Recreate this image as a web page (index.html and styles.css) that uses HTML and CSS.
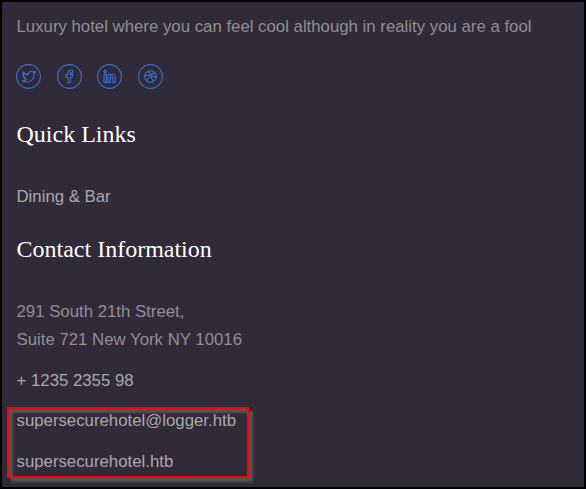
FILE: index.html
```html
<!DOCTYPE html>
<html lang="en">
<head>
<meta charset="utf-8">
<title>Hotel footer</title>
<link rel="stylesheet" href="styles.css">
</head>
<body>
<footer class="footer">
  <p class="tagline">Luxury hotel where you can feel cool although in reality you are a fool</p>
  <ul class="social">
    <li><a class="social-link"><svg viewBox="0 0 25 25"><circle cx="12.5" cy="12.5" r="11.9"/><path d="M6.8 8C8.5 9.7 10.3 10.6 12.4 10.7C12 8.5 13.3 7.2 15 7.2C16 7.2 16.6 7.6 17.1 8.1L19 7.3L18.2 8.9L19.5 8.7L18 10.3C18.1 14.8 15 18 11 18C9.3 18 7.9 17.5 6.6 16.7C8.2 16.7 9.3 16.3 10.3 15.6C9 15.4 8.2 14.7 7.8 13.6H9C7.8 13.1 7 12.2 6.9 10.8L8.1 11.1C6.8 10.1 6.5 9.2 6.8 8Z"/></svg></a></li>
    <li><a class="social-link"><svg viewBox="0 0 25 25"><circle cx="12.5" cy="12.5" r="11.9"/><path d="M11 18.5V13.2H9V10.6H11V9.1C11 7 12.1 6.3 13.7 6.3H15.5V8.6H14.3C13.7 8.6 13.4 8.9 13.4 9.5V10.6H15.5L15.2 13.2H13.4V18.5Z"/></svg></a></li>
    <li><a class="social-link"><svg viewBox="0 0 25 25"><circle cx="12.5" cy="12.5" r="11.9"/><circle cx="8.1" cy="7.6" r="1.2"/><path d="M7 10.3H9.3V18.5H7ZM11 10.3H13.1V11.3C14.9 9.4 18.2 10 18.2 13.1V18.5H15.9V13.8C15.9 11.9 13.3 11.9 13.3 13.8V18.5H11Z"/></svg></a></li>
    <li><a class="social-link"><svg viewBox="0 0 25 25"><circle cx="12.5" cy="12.5" r="11.9"/><circle cx="12.5" cy="12.5" r="5.8"/><path d="M10.4 7.1C12.7 10 14.2 13.5 14.9 17.7M6.8 11.5C11.1 11.7 14.7 10.7 16.5 8.4M8.5 16.7C10.3 13.2 13.8 11.7 18.2 12.9"/></svg></a></li>
  </ul>
  <h2 class="heading">Quick Links</h2>
  <ul class="list links"><li>Dining &amp; Bar</li></ul>
  <h2 class="heading">Contact Information</h2>
  <ul class="list">
    <li class="address">291 South 21th Street,<br>Suite 721 New York NY 10016</li>
    <li>+ 1235 2355 98</li>
  </ul>
  <div class="highlight">
    <ul class="list">
      <li>supersecurehotel@logger.htb</li>
      <li>supersecurehotel.htb</li>
    </ul>
  </div>
</footer>
</body>
</html>
```
FILE: styles.css
```css
* { box-sizing: border-box; }
body { margin: 0; background: #000; }
.footer {
  width: 586px;
  height: 489px;
  overflow: hidden;
  padding: 11px 14.5px 0;
  border: 2px solid #000;
  background: #312a39;
  color: #aba8ae;
  font: 16.8px/28px "Liberation Sans", Arial, sans-serif;
}
.tagline { margin: 0; color: #928e96; white-space: nowrap; }
.social {
  display: flex;
  gap: 15.7px;
  margin: 23px 0 0 -0.5px;
  padding: 0;
  list-style: none;
}
.social-link { display: block; width: 25px; height: 25px; }
.social svg {
  display: block;
  width: 25px;
  height: 25px;
  fill: none;
  stroke: #3c70d2;
  stroke-width: 1.1;
  stroke-linejoin: round;
}
.heading {
  margin: 27px 0 0;
  color: #fff;
  font: 400 24px/36px "Liberation Serif", "Times New Roman", serif;
}
.list { margin: 0; padding: 0; list-style: none; }
.list li + li { margin-top: 13px; }
.heading + .list { margin-top: 31px; }
.links + .heading { margin-top: 20px; }
.address { color: #928e96; }
.highlight {
  width: 242px;
  height: 71px;
  margin: 12px 0 0 -9.5px;
  padding-left: 7.5px;
  border: 2px solid #f00;
  box-shadow: 4px 4px 2px #555257, inset 4px 4px 2px #555257;
}
.highlight .list { margin-top: -2px; }
```
